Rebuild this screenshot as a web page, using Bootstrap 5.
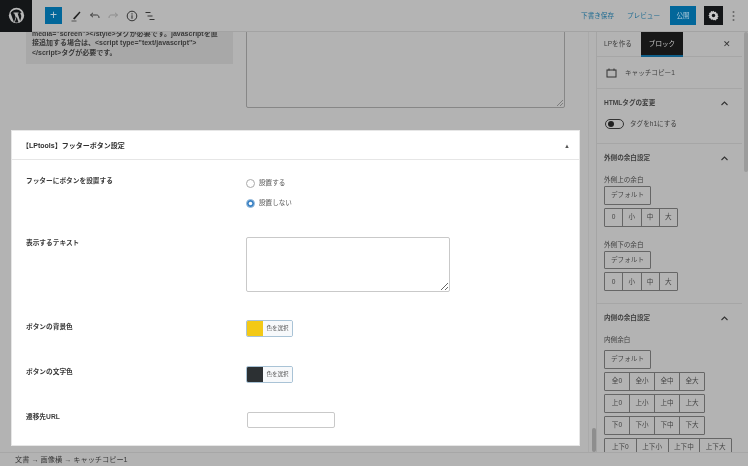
<!DOCTYPE html>
<html lang="ja">
<head>
<meta charset="utf-8">
<title>LPtools</title>
<link rel="stylesheet" href="https://cdn.jsdelivr.net/npm/bootstrap@5.3.0/dist/css/bootstrap.min.css">
<style>
html,body{height:466px;overflow:hidden;margin:0;background:#b3b3b3}
body{font-family:"Liberation Sans","Noto Sans CJK JP",sans-serif;font-size:6.6px;line-height:10px;color:#3f3f3f}
.shell{height:466px;width:748px;position:relative;filter:blur(.35px);background:#b3b3b3}
.topbar{height:32px;background:#b4b4b4;border-bottom:1px solid #a3a3a3}
.wp-box{width:32px;height:32px;background:#141618}
.add-btn{width:17px;height:17px;background:#02679a;margin-left:13px;margin-right:8px;color:#b5c9d5;font-size:12px;line-height:16px;text-align:center}
.tool{width:12px;height:12px;margin-right:6.5px}
.link-blue{color:#1d6a91;font-size:6.6px}
.lk-a{margin-right:13px}
.lk-b{margin-right:10px}
.pub-btn{width:26px;height:19px;background:#02679a;color:#a9c7d8;font-size:6.6px;line-height:19px;text-align:center;margin-right:8px}
.gear-box{width:19px;height:19px;background:#141618;margin-right:9px}
.dots{width:3px;margin-right:13px}
.workspace{height:420px}
.main-area{width:588px;position:relative;overflow:hidden}
.note-box{position:absolute;left:26px;top:-10px;width:207px;height:42px;background:#a8a8a8;padding:6.5px 6px 0;font-weight:700;font-size:7px;line-height:9.800px;color:#3a3a3a;overflow:hidden;white-space:nowrap}
.bg-area{position:absolute;left:246px;top:-10px;width:319px;height:86px;border:1px solid #878787;border-radius:2px}
.grip{position:absolute;right:1px;bottom:1px}
.main-track{width:9px;border-left:1px solid #aaa;border-right:1px solid #a5a5a5;position:relative}
.main-thumb{position:absolute;left:3px;bottom:0;width:4px;height:24px;background:#8e8e8e;border-radius:2px}
.side{width:145px}
.side-scroll{width:6px;position:relative}
.side-thumb{position:absolute;right:0;top:0;width:4px;height:140px;background:#9c9c9c;border-radius:2px}
.tabs{height:25px;border-bottom:1px solid #a6a6a6;padding-left:7px}
.tab-lp{width:37px}
.tab-block{width:42px;height:25px;background:#171717;color:#c9c9c9;border-bottom:2px solid #0f5f8a;text-align:center;line-height:23px}
.close-x{margin-left:auto;margin-right:11px;font-size:9px;color:#333}
.block-row{height:32px;padding-left:9px;border-bottom:1px solid #a6a6a6;gap:8px}
.sec{border-bottom:1px solid #a6a6a6;padding:9px 7px 0}
.sec-title{font-weight:700;display:flex;justify-content:space-between;padding-right:7px;height:10px;align-items:center}
.sec-html{height:55px;padding-top:9px}
.sec-title svg{display:block}
.tog-row{margin-top:11px;gap:6px}
.tog{width:19px;height:10px;border:1px solid #333;border-radius:5px;position:relative;margin-left:1px}
.tog::before{content:"";position:absolute;left:1.500px;top:1px;width:6px;height:6px;border-radius:50%;background:#222}
.sec-out{height:160px}
.sec-in{height:150px}
.cap-first{margin-top:12px;margin-bottom:1px}
.cap-next{margin-top:13px;margin-bottom:1px}
.cap-inner{margin-top:12px;margin-bottom:5px}
.btn.sb-def,.btn.sb-b{background:transparent;border:1px solid #666;color:#444;font-size:6.6px;padding:0;border-radius:1px;line-height:16px}
.btn.sb-def{width:47px;height:18.500px;display:block}
.btn.sb-b{height:19px;flex:0 0 auto}
.grp-4 .btn{width:19.250px}
.grp-5 .btn{width:26px}
.grp-6 .btn{width:32.750px}
.btn-group{display:flex;width:max-content;margin-top:3px}
.btn-group>.btn:not(:first-child){margin-left:-1px}
.statusbar{height:14px;background:#b3b3b3;border-top:1px solid #a7a7a7;padding-left:15px;font-size:7.200px;line-height:14px;color:#3a3a3a;position:relative}
.modal-panel{position:absolute;left:11px;top:130px;width:569px;height:316px;background:#fff;border:1px solid #e6e6e6;color:#444}
.panel-head{height:29px;padding:2px 9px 0 10px;border-bottom:1px solid #e6e6e6;font-weight:700;font-size:7px;color:#2e2e2e}
.caret-up{font-size:6px;color:#555}
.panel-row{display:flex;padding-left:14px}
.panel-label{width:220px;font-weight:700;font-size:6.700px;color:#3a3a3a}
.r-radio{height:78px;padding-top:16px}
.r-text{height:84px}
.r-bg{height:45px}
.r-col{height:45px}
.radio-line{display:flex;align-items:center;gap:4px;height:10px;margin-top:2px;margin-bottom:10px;color:#555}
.form-check-input.rad{width:9px;height:9px;margin:0;flex:none;border-color:#aaa}
.form-check-input.rad:checked{background-color:#3b82c4;border-color:#9fc0de}
.form-control.txa{width:204px;height:55px;border:1px solid #c9c9c9;border-radius:2px;margin-top:-1px;padding:0;resize:both}
.swatch-wrap{width:47px;height:17px;border:1px solid #a9c3d6;border-radius:2px;margin-top:-2px;overflow:hidden;font-size:5.500px;color:#555}
.r-col .swatch-wrap{margin-top:-1px}
.swatch{width:16px;height:100%}
.sw-y{background:#f3c916}
.sw-d{background:#2c3033}
.swatch-label{flex:1;text-align:center;background:#f7f9fb;line-height:15px}
.form-control.url{width:88px;height:16px;padding:0;margin-top:0;margin-left:1px;border:1px solid #c9c9c9;border-radius:2px}
</style>
</head>
<body>
<div class="shell d-flex flex-column">
  <div class="topbar d-flex align-items-center">
    <div class="wp-box d-flex align-items-center justify-content-center">
      <svg width="17" height="17" viewBox="0 0 20 20"><circle cx="10" cy="10" r="9" fill="#b8b8b8"/><path d="M3 7l4 11 2-6-1.500-4.500H6.500V6.500h6v1h-1.200l3 9 1-3.500c.6-2 .4-3.500-.8-5 .2-1.200 1-1.800 1.800-1.500L13 3.500C10 2 6 3 3.800 6z M10.200 11.500 8 18c1.500.5 3 .4 4.300 0z" fill="#141618"/></svg>
    </div>
    <div class="add-btn">+</div>
    <svg class="tool" viewBox="0 0 12 12"><path d="M3 8.500 9.500 1.500l1 1L4.500 9.500z" fill="#222"/><path d="M1.500 11h5" stroke="#555" stroke-width="1"/></svg>
    <svg class="tool" viewBox="0 0 12 12"><path d="M1.500 5 4 2.800M1.500 5 4 7.200M1.500 5H7.500c2 0 2.500 1.300 2.500 3" fill="none" stroke="#3a3a3a" stroke-width="1"/></svg>
    <svg class="tool" viewBox="0 0 12 12"><path d="M10.500 5 8 2.800M10.500 5 8 7.200M10.500 5H4.500C2.500 5 2 6.300 2 8" fill="none" stroke="#8d8d8d" stroke-width="1"/></svg>
    <svg class="tool" viewBox="0 0 12 12"><circle cx="6" cy="6" r="4.800" fill="none" stroke="#333" stroke-width="1"/><path d="M6 5.300v3.500M6 3.200v1.200" stroke="#333" stroke-width="1.100"/></svg>
    <svg class="tool" viewBox="0 0 12 12"><path d="M1.500 2.500h5M3.500 6h5M5.500 9.500h5" stroke="#333" stroke-width="1.100"/></svg>
    <div class="ms-auto d-flex align-items-center">
      <span class="link-blue lk-a">下書き保存</span>
      <span class="link-blue lk-b">プレビュー</span>
      <div class="pub-btn">公開</div>
      <div class="gear-box d-flex align-items-center justify-content-center">
        <svg width="11" height="11" viewBox="0 0 16 16"><path d="M8 1l1.300 2 2.300-.6.600 2.300 2.300.6-.6 2.300 1.600 1.400-1.600 1.400.6 2.300-2.300.6-.6 2-2.300-.6L8 15l-1.300-1.300-2.300.6-.6-2-2.300-.6.6-2.300L.5 8l1.600-1.400-.6-2.300 2.300-.6.600-2.300 2.300.6z" fill="#c9c9c9"/><circle cx="8" cy="8" r="2.500" fill="#141618"/></svg>
      </div>
      <svg class="dots" height="12" viewBox="0 0 3 12"><circle cx="1.500" cy="2" r="1" fill="#666"/><circle cx="1.500" cy="6" r="1" fill="#666"/><circle cx="1.500" cy="10" r="1" fill="#666"/></svg>
    </div>
  </div>

  <div class="workspace d-flex">
    <div class="main-area">
      <div class="note-box">media="screen"&gt;&lt;/style&gt;タグが必要です。javascriptを直<br>接追加する場合は、&lt;script type="text/javascript"&gt;<br>&lt;/script&gt;タグが必要です。</div>
      <div class="bg-area">
        <svg class="grip" width="6" height="6" viewBox="0 0 6 6"><path d="M0 6 6 0M3 6l3-3" stroke="#666" stroke-width=".7"/></svg>
      </div>
    </div>
    <div class="main-track"><div class="main-thumb"></div></div>
    <div class="side">
      <div class="tabs d-flex align-items-center">
        <div class="tab-lp">LPを作る</div>
        <div class="tab-block">ブロック</div>
        <div class="close-x">✕</div>
      </div>
      <div class="block-row d-flex align-items-center">
        <svg width="11" height="10" viewBox="0 0 11 10"><rect x="1" y="2" width="9" height="7" fill="none" stroke="#333" stroke-width="1"/><path d="M3 .5v2M8 .5v2" stroke="#333" stroke-width="1"/></svg>
        <span>キャッチコピー1</span>
      </div>
      <div class="sec sec-html">
        <div class="sec-title">HTMLタグの変更<svg width="7" height="5" viewBox="0 0 7 5"><path d="M.5 4 3.500 1l3 3" fill="none" stroke="#333" stroke-width="1.100"/></svg></div>
        <div class="d-flex align-items-center tog-row">
          <div class="tog"></div><span>タグをh1にする</span>
        </div>
      </div>
      <div class="sec sec-out">
        <div class="sec-title">外側の余白設定<svg width="7" height="5" viewBox="0 0 7 5"><path d="M.5 4 3.500 1l3 3" fill="none" stroke="#333" stroke-width="1.100"/></svg></div>
        <div class="cap-first">外側上の余白</div>
        <button class="btn sb-def" type="button">デフォルト</button>
        <div class="btn-group grp-4"><button class="btn sb-b" type="button">0</button><button class="btn sb-b" type="button">小</button><button class="btn sb-b" type="button">中</button><button class="btn sb-b" type="button">大</button></div>
        <div class="cap-next">外側下の余白</div>
        <button class="btn sb-def" type="button">デフォルト</button>
        <div class="btn-group grp-4"><button class="btn sb-b" type="button">0</button><button class="btn sb-b" type="button">小</button><button class="btn sb-b" type="button">中</button><button class="btn sb-b" type="button">大</button></div>
      </div>
      <div class="sec sec-in">
        <div class="sec-title">内側の余白設定<svg width="7" height="5" viewBox="0 0 7 5"><path d="M.5 4 3.500 1l3 3" fill="none" stroke="#333" stroke-width="1.100"/></svg></div>
        <div class="cap-inner">内側余白</div>
        <button class="btn sb-def" type="button">デフォルト</button>
        <div class="btn-group grp-5"><button class="btn sb-b" type="button">全0</button><button class="btn sb-b" type="button">全小</button><button class="btn sb-b" type="button">全中</button><button class="btn sb-b" type="button">全大</button></div>
        <div class="btn-group grp-5"><button class="btn sb-b" type="button">上0</button><button class="btn sb-b" type="button">上小</button><button class="btn sb-b" type="button">上中</button><button class="btn sb-b" type="button">上大</button></div>
        <div class="btn-group grp-5"><button class="btn sb-b" type="button">下0</button><button class="btn sb-b" type="button">下小</button><button class="btn sb-b" type="button">下中</button><button class="btn sb-b" type="button">下大</button></div>
        <div class="btn-group grp-6"><button class="btn sb-b" type="button">上下0</button><button class="btn sb-b" type="button">上下小</button><button class="btn sb-b" type="button">上下中</button><button class="btn sb-b" type="button">上下大</button></div>
      </div>
    </div>
    <div class="side-scroll"><div class="side-thumb"></div></div>
  </div>

  <div class="statusbar">文書 → 画像横 → キャッチコピー1</div>

  <div class="modal-panel">
    <div class="panel-head d-flex align-items-center justify-content-between">
      <span>【LPtools】フッターボタン設定</span><span class="caret-up">▲</span>
    </div>
    <div class="panel-row r-radio">
      <div class="panel-label">フッターにボタンを設置する</div>
      <div>
        <label class="radio-line"><input class="form-check-input rad" type="radio" name="f1">設置する</label>
        <label class="radio-line"><input class="form-check-input rad" type="radio" name="f1" checked>設置しない</label>
      </div>
    </div>
    <div class="panel-row r-text">
      <div class="panel-label">表示するテキスト</div>
      <textarea class="form-control txa" aria-label="表示するテキスト"></textarea>
    </div>
    <div class="panel-row r-bg">
      <div class="panel-label">ボタンの背景色</div>
      <div class="swatch-wrap d-flex"><div class="swatch sw-y"></div><div class="swatch-label">色を選択</div></div>
    </div>
    <div class="panel-row r-col">
      <div class="panel-label">ボタンの文字色</div>
      <div class="swatch-wrap d-flex"><div class="swatch sw-d"></div><div class="swatch-label">色を選択</div></div>
    </div>
    <div class="panel-row">
      <div class="panel-label">遷移先URL</div>
      <input class="form-control url" type="text" aria-label="遷移先URL">
    </div>
  </div>
</div>
<script src="https://cdn.jsdelivr.net/npm/bootstrap@5.3.0/dist/js/bootstrap.bundle.min.js"></script>
</body>
</html>
